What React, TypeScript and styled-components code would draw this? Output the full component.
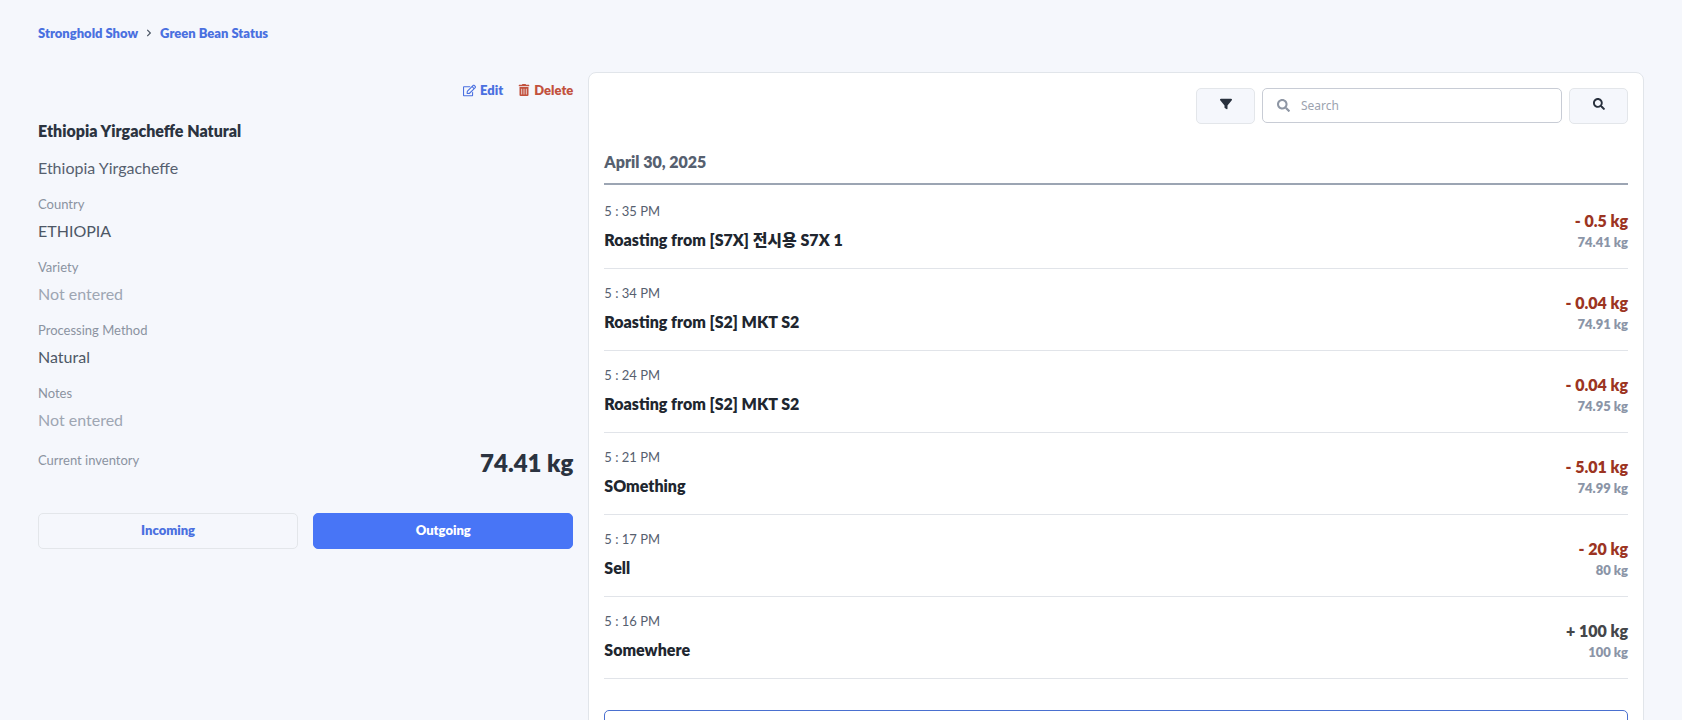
import React from "react";
import styled, { createGlobalStyle, css } from "styled-components";
import { FaChevronRight, FaRegEdit, FaSearch, FaTrashAlt } from "react-icons/fa";
import { FaFilter } from "react-icons/fa6";

const GlobalStyle = createGlobalStyle`
  *, *::before, *::after { box-sizing: border-box; }
  body {
    margin: 0;
    background: #f5f7fc;
    color: #2b3340;
    font-family: Lato, "Noto Sans CJK KR", sans-serif;
    font-size: 16px;
    line-height: 24px;
  }
  button, input { font: inherit; }
  h1, h2, p, dl, dd, ul { margin: 0; padding: 0; }
`;

const Page = styled.div`
  padding: 23px 38px;
`;

const Breadcrumbs = styled.nav`
  display: flex;
  align-items: center;
  gap: 7px;
  margin-bottom: 29px;
  font-size: 13px;
  line-height: 20px;
  color: #4d5766;
`;

const Crumb = styled.a`
  color: #4a70e0;
  font-weight: 800;
  text-decoration: none;
`;

const Columns = styled.main`
  display: grid;
  grid-template-columns: 1fr 2fr;
`;

const Details = styled.section`
  padding-top: 8px;
`;

const Actions = styled.div`
  display: flex;
  justify-content: flex-end;
  gap: 15px;
`;

const ActionButton = styled.button<{ $danger?: boolean }>`
  display: flex;
  align-items: center;
  gap: 4px;
  padding: 0;
  border: 0;
  background: none;
  color: ${({ $danger }) => ($danger ? "#c2513d" : "#4a70e0")};
  font-size: 13px;
  font-weight: 800;
  line-height: 20px;
  cursor: pointer;
`;

const BeanName = styled.h1`
  margin-top: 19px;
  font-size: 16px;
  font-weight: 800;
  line-height: 24px;
`;

const BeanOrigin = styled.p`
  margin-top: 13px;
  color: #56606f;
`;

const Label = styled.dt`
  color: #8b93a1;
  font-size: 13px;
  line-height: 20px;
`;

const Fields = styled.dl`
  display: grid;
  gap: 14px;
  margin-top: 14px;
`;

const Field = styled.div`
  display: grid;
  gap: 5px;
`;

const Value = styled.dd<{ $empty?: boolean }>`
  color: ${({ $empty }) => ($empty ? "#9ea6b3" : "#4d5766")};
`;

const Inventory = styled.dl`
  display: flex;
  align-items: center;
  justify-content: space-between;
  margin-top: 13px;
`;

const InventoryLabel = styled(Label)`
  padding-bottom: 6px;
`;

const Total = styled.dd`
  font-size: 24px;
  font-weight: 800;
  line-height: 36px;
`;

const StockButtons = styled.div`
  display: grid;
  grid-template-columns: 1fr 1fr;
  gap: 15px;
  margin-top: 32px;
`;

const StockButton = styled.button<{ $primary?: boolean }>`
  height: 36px;
  padding: 0 0 2px;
  border: 1px solid ${({ $primary }) => ($primary ? "#4875f6" : "#e3e6ea")};
  border-radius: 5px;
  background: ${({ $primary }) => ($primary ? "#4875f6" : "#f5f7fc")};
  color: ${({ $primary }) => ($primary ? "#ffffff" : "#4a70e0")};
  font-size: 13px;
  font-weight: 800;
  cursor: pointer;
`;

const HistoryPanel = styled.section`
  margin-left: 15px;
  padding: 15px;
  border: 1px solid #e1e5ea;
  border-radius: 8px;
  background: #ffffff;
`;

const Toolbar = styled.form`
  display: flex;
  align-items: flex-start;
  justify-content: flex-end;
  gap: 7px;
`;

const IconButton = styled.button`
  display: flex;
  align-items: center;
  justify-content: center;
  width: 59px;
  height: 36px;
  padding: 0 0 4px;
  border: 1px solid #e3e6ea;
  border-radius: 5px;
  background: #f5f7fc;
  color: #28303d;
  cursor: pointer;
`;

const SearchBox = styled.label`
  display: flex;
  align-items: center;
  gap: 11px;
  width: 300px;
  height: 35px;
  padding: 0 14px;
  border: 1px solid #c8ccd5;
  border-radius: 5px;
  background: #ffffff;
  color: #8e96a4;
`;

const SearchInput = styled.input`
  flex: 1;
  min-width: 0;
  padding: 0;
  border: 0;
  outline: 0;
  background: none;
  color: #2b3340;
  font-family: "Noto Sans", "Noto Sans CJK KR", sans-serif;
  font-size: 12px;
  line-height: 20px;
  &::placeholder { color: #9ca3af; opacity: 1; }
`;

const DateHeading = styled.h2`
  margin-top: 26px;
  padding-bottom: 9px;
  border-bottom: 2px solid #9ca5b3;
  color: #56606f;
  font-size: 16px;
  font-weight: 800;
  line-height: 24px;
`;

const Entries = styled.ul`
  padding-top: 2px;
  list-style: none;
`;

const Entry = styled.li`
  display: flex;
  align-items: flex-end;
  justify-content: space-between;
  padding: 14px 0 16px;
  border-bottom: 1px solid #e1e4e9;
`;

const EntryTime = styled.time`
  display: block;
  margin-bottom: 7px;
  color: #56606f;
  font-size: 13px;
  line-height: 20px;
`;

const EntryTitle = styled.p`
  color: #20262f;
  font-weight: 800;
`;

const Amounts = styled.div`
  font-weight: 800;
  text-align: right;
`;

const Change = styled.p<{ $incoming?: boolean }>`
  color: #9c3422;
  line-height: 22px;
  ${({ $incoming }) => $incoming && css`color: #44464a;`}
`;

const Balance = styled.p`
  color: #8b95a7;
  font-size: 13px;
  line-height: 20px;
`;

const MoreButton = styled.button`
  display: block;
  width: 100%;
  height: 36px;
  margin-top: 31px;
  border: 1px solid #4a70d0;
  border-radius: 5px;
  background: #ffffff;
  cursor: pointer;
`;

const fields = [
  { label: "Country", value: "ETHIOPIA" },
  { label: "Variety", value: "" },
  { label: "Processing Method", value: "Natural" },
  { label: "Notes", value: "" },
];

const entries = [
  { time: "5 : 35 PM", title: "Roasting from [S7X] 전시용 S7X 1", change: "- 0.5 kg", balance: "74.41 kg" },
  { time: "5 : 34 PM", title: "Roasting from [S2] MKT S2", change: "- 0.04 kg", balance: "74.91 kg" },
  { time: "5 : 24 PM", title: "Roasting from [S2] MKT S2", change: "- 0.04 kg", balance: "74.95 kg" },
  { time: "5 : 21 PM", title: "SOmething", change: "- 5.01 kg", balance: "74.99 kg" },
  { time: "5 : 17 PM", title: "Sell", change: "- 20 kg", balance: "80 kg" },
  { time: "5 : 16 PM", title: "Somewhere", change: "+ 100 kg", balance: "100 kg" },
];

export default function App() {
  return (
    <>
      <GlobalStyle />
      <Page>
        <Breadcrumbs aria-label="Breadcrumb">
          <Crumb href="#show">Stronghold Show</Crumb>
          <FaChevronRight size={8} aria-hidden />
          <Crumb href="#beans">Green Bean Status</Crumb>
        </Breadcrumbs>
        <Columns>
          <Details>
            <Actions>
              <ActionButton type="button"><FaRegEdit size={13} aria-hidden />Edit</ActionButton>
              <ActionButton type="button" $danger><FaTrashAlt size={12} aria-hidden />Delete</ActionButton>
            </Actions>
            <BeanName>Ethiopia Yirgacheffe Natural</BeanName>
            <BeanOrigin>Ethiopia Yirgacheffe</BeanOrigin>
            <Fields>
              {fields.map(({ label, value }) => (
                <Field key={label}>
                  <Label>{label}</Label>
                  <Value $empty={!value}>{value || "Not entered"}</Value>
                </Field>
              ))}
            </Fields>
            <Inventory>
              <InventoryLabel>Current inventory</InventoryLabel>
              <Total>74.41 kg</Total>
            </Inventory>
            <StockButtons>
              <StockButton type="button">Incoming</StockButton>
              <StockButton type="button" $primary>Outgoing</StockButton>
            </StockButtons>
          </Details>
          <HistoryPanel>
            <Toolbar role="search" onSubmit={(event) => event.preventDefault()}>
              <IconButton type="button" aria-label="Filter"><FaFilter size={12} /></IconButton>
              <SearchBox>
                <FaSearch size={13} aria-hidden />
                <SearchInput type="text" placeholder="Search" aria-label="Search" />
              </SearchBox>
              <IconButton type="submit" aria-label="Search"><FaSearch size={12} /></IconButton>
            </Toolbar>
            <DateHeading>April 30, 2025</DateHeading>
            <Entries>
              {entries.map((entry) => (
                <Entry key={entry.time}>
                  <div>
                    <EntryTime>{entry.time}</EntryTime>
                    <EntryTitle>{entry.title}</EntryTitle>
                  </div>
                  <Amounts>
                    <Change $incoming={entry.change.startsWith("+")}>{entry.change}</Change>
                    <Balance>{entry.balance}</Balance>
                  </Amounts>
                </Entry>
              ))}
            </Entries>
            <MoreButton type="button" aria-label="Show more" />
          </HistoryPanel>
        </Columns>
      </Page>
    </>
  );
}
